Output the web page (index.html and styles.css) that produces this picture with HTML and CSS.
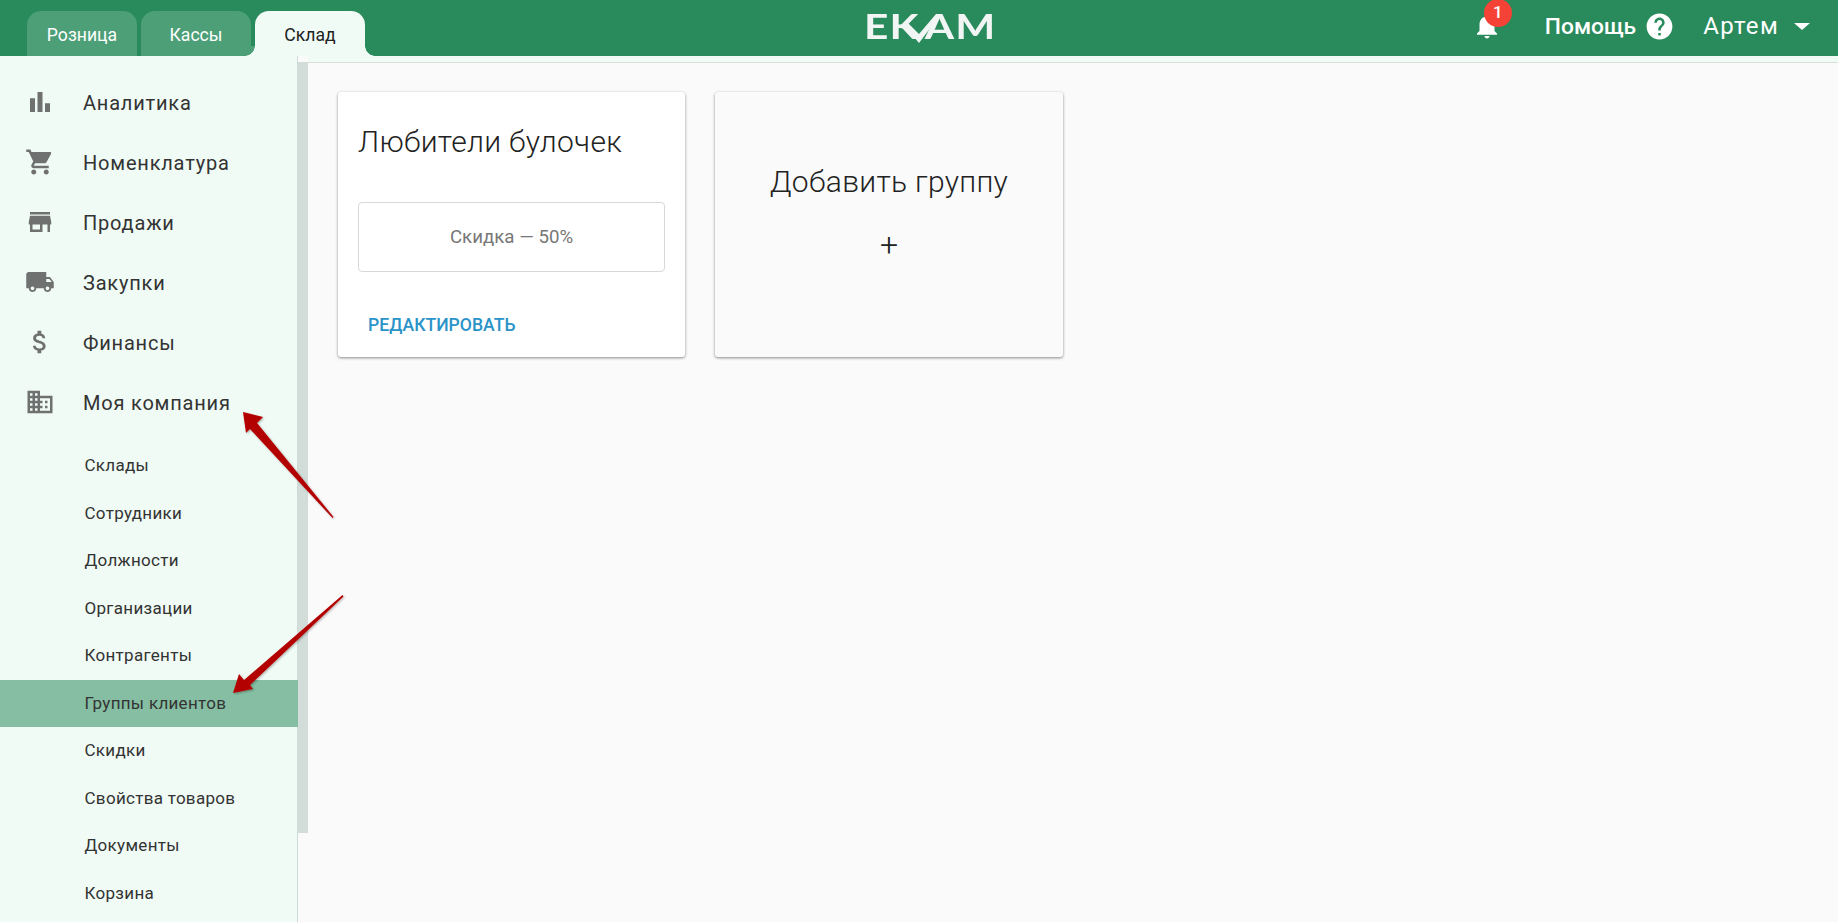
FILE: index.html
```html
<!DOCTYPE html>
<html lang="ru">

<head>
    <meta charset="UTF-8">
    <title>Группы клиентов</title>
    <link rel="stylesheet" href="styles.css">
</head>

<body>
    <header class="topbar">
        <div class="tabs">
            <a class="tab">Розница</a>
            <a class="tab">Кассы</a>
            <a class="tab active">Склад</a>
        </div>
        <div class="logo">
            <span class="logo-text">EK<span class="logo-gap">A</span>M</span>
            <svg class="logo-check" viewBox="0 0 127 56"><path d="M37 24l5-1 11 11 17-20h5L53 43z" /></svg>
        </div>
        <div class="top-right">
            <div class="bell">
                <svg class="bell-icon" viewBox="0 0 24 24"><path d="M12 22c1.1 0 2-.9 2-2h-4c0 1.1.89 2 2 2zm6-6v-5c0-3.07-1.64-5.64-4.5-6.32V4c0-.83-.67-1.5-1.5-1.5s-1.5.67-1.5 1.5v.68C7.63 5.36 6 7.92 6 11v5l-2 2v1h16v-1l-2-2z" /></svg>
                <span class="badge">1</span>
            </div>
            <span class="help-label">Помощь</span>
            <svg class="help-icon" viewBox="0 0 24 24"><path d="M12 2C6.48 2 2 6.48 2 12s4.48 10 10 10 10-4.48 10-10S17.52 2 12 2zm1 17h-2v-2h2v2zm2.07-7.75l-.9.92C13.45 12.9 13 13.5 13 15h-2v-.5c0-1.1.45-2.1 1.17-2.83l1.24-1.26c.37-.36.59-.86.59-1.41 0-1.1-.9-2-2-2s-2 .9-2 2H8c0-2.21 1.79-4 4-4s4 1.79 4 4c0 .88-.36 1.68-.93 2.25z" /></svg>
            <span class="user">Артем</span>
            <span class="caret"></span>
        </div>
    </header>

    <div class="page">
        <nav class="sidebar">
            <a class="nav-item">
                <svg viewBox="0 0 24 24"><path d="M4 9h4v11H4zm12 4h4v7h-4zm-6-9h4v16h-4z" /></svg>
                Аналитика
            </a>
            <a class="nav-item">
                <svg viewBox="0 0 24 24"><path d="M7 18c-1.1 0-1.99.9-1.99 2S5.9 22 7 22s2-.9 2-2-.9-2-2-2zM1 2v2h2l3.6 7.59-1.35 2.45c-.16.28-.25.61-.25.96 0 1.1.9 2 2 2h12v-2H7.42c-.14 0-.25-.11-.25-.25l.03-.12.9-1.63h7.45c.75 0 1.41-.41 1.75-1.03l3.58-6.49c.08-.14.12-.31.12-.48 0-.55-.45-1-1-1H5.21l-.94-2H1zm16 16c-1.1 0-1.99.9-1.99 2s.89 2 1.99 2 2-.9 2-2-.9-2-2-2z" /></svg>
                Номенклатура
            </a>
            <a class="nav-item">
                <svg viewBox="0 0 24 24"><path d="M20 4H4v2h16V4zm1 10v-2l-1-5H4l-1 5v2h1v6h10v-6h4v6h2v-6h1zm-9 4H6v-4h6v4z" /></svg>
                Продажи
            </a>
            <a class="nav-item">
                <svg viewBox="0 0 24 24"><path d="M20 8h-3V4H3c-1.1 0-2 .9-2 2v11h2c0 1.66 1.34 3 3 3s3-1.34 3-3h6c0 1.66 1.34 3 3 3s3-1.34 3-3h2v-5l-3-4zM6 18.5c-.83 0-1.5-.67-1.5-1.5s.67-1.5 1.5-1.5 1.5.67 1.5 1.5-.67 1.5-1.5 1.5zm13.5-9l1.96 2.5H17V9.5h2.5zm-1.5 9c-.83 0-1.5-.67-1.5-1.5s.67-1.5 1.5-1.5 1.5.67 1.5 1.5-.67 1.5-1.5 1.5z" /></svg>
                Закупки
            </a>
            <a class="nav-item">
                <svg viewBox="0 0 24 24"><path d="M11.8 10.9c-2.27-.59-3-1.2-3-2.15 0-1.09 1.01-1.85 2.7-1.85 1.78 0 2.44.85 2.5 2.1h2.21c-.07-1.72-1.12-3.3-3.21-3.81V3h-3v2.16c-1.94.42-3.5 1.68-3.5 3.61 0 2.31 1.91 3.46 4.7 4.13 2.5.6 3 1.48 3 2.41 0 .69-.49 1.79-2.7 1.79-2.06 0-2.87-.92-2.98-2.1h-2.2c.12 2.19 1.76 3.42 3.68 3.83V21h3v-2.15c1.95-.37 3.5-1.5 3.5-3.55 0-2.84-2.43-3.81-4.7-4.4z" /></svg>
                Финансы
            </a>
            <a class="nav-item">
                <svg viewBox="0 0 24 24"><path d="M12 7V3H2v18h20V7H12zM6 19H4v-2h2v2zm0-4H4v-2h2v2zm0-4H4V9h2v2zm0-4H4V5h2v2zm4 12H8v-2h2v2zm0-4H8v-2h2v2zm0-4H8V9h2v2zm0-4H8V5h2v2zm10 12h-8v-2h2v-2h-2v-2h2v-2h-2V9h8v10zm-2-8h-2v2h2v-2zm0 4h-2v2h2v-2z" /></svg>
                Моя компания
            </a>

            <div class="sub-list">
                <a class="sub-item">Склады</a>
                <a class="sub-item">Сотрудники</a>
                <a class="sub-item">Должности</a>
                <a class="sub-item">Организации</a>
                <a class="sub-item">Контрагенты</a>
                <a class="sub-item current">Группы клиентов</a>
                <a class="sub-item">Скидки</a>
                <a class="sub-item">Свойства товаров</a>
                <a class="sub-item">Документы</a>
                <a class="sub-item">Корзина</a>
            </div>
        </nav>
        <div class="scrollbar"></div>

        <main class="content">
            <div class="strip"></div>
            <div class="cards">
                <section class="card">
                    <h2 class="card-title">Любители булочек</h2>
                    <div class="discount">Скидка — 50%</div>
                    <a class="edit-link">Редактировать</a>
                </section>
                <section class="card add-card">
                    <h2 class="add-title">Добавить группу</h2>
                    <div class="add-plus">+</div>
                </section>
            </div>
        </main>
    </div>

    <!-- red annotation arrows on top of the screenshot -->
    <svg class="arrows" viewBox="0 0 1838 922">
        <defs>
            <filter id="arrow-shadow" x="-20%" y="-20%" width="140%" height="140%">
                <feDropShadow dx="1" dy="1" stdDeviation="1" flood-color="#000" flood-opacity=".3" />
            </filter>
        </defs>
        <g filter="url(#arrow-shadow)" fill="#b30404">
            <path d="M243 412L263 417 257 423 333.500 517 332.500 518 250 429 246 433z" />
            <path d="M233 693L239 674 244 680 342.500 595 343.500 596.500 250 685 253 689z" />
        </g>
    </svg>
</body>

</html>
```

FILE: styles.css
```css
* {
    box-sizing: border-box;
}

body {
    margin: 0;
    height: 922px;
    overflow: hidden;
    background: #fafafa;
    font-family: Roboto, "Liberation Sans", sans-serif;
    color: #333;
}

a {
    display: block;
}

/* top bar */
.topbar {
    display: grid;
    grid-template-columns: 866px 127px 1fr;
    height: 56px;
    background: #298a5c;
    color: #fff;
}

.tabs {
    display: flex;
    align-items: flex-end;
    gap: 4px;
    padding-left: 27px;
}

.tab {
    position: relative;
    width: 110px;
    height: 45px;
    padding-top: 9px;
    border-radius: 14px 14px 0 0;
    background: #4d9f78;
    font-size: 17.600px;
    line-height: 30px;
    text-align: center;
}

.tab:nth-child(2) {
    border-bottom-right-radius: 8px;
}

.tab.active {
    background: #f0fbf5;
    color: #222;
}

.tab.active::before,
.tab.active::after {
    content: "";
    position: absolute;
    bottom: 0;
    width: 10px;
    height: 10px;
}

.tab.active::before {
    left: -10px;
    background: radial-gradient(circle at 0 0, #4d9f78 9.500px, #f0fbf5 10px);
}

.tab.active::after {
    right: -10px;
    background: radial-gradient(circle at 100% 0, #298a5c 9.500px, #f0fbf5 10px);
}

.logo {
    position: relative;
    height: 56px;
}

.logo-text {
    display: block;
    margin: -3px 0 0 -2px;
    font-family: Lato, sans-serif;
    font-size: 35px;
    font-weight: 700;
    line-height: 56px;
    letter-spacing: 1px;
    white-space: nowrap;
    color: #f1f5f3;
    transform: scaleX(1.21);
    transform-origin: 0 0;
}

.logo-gap {
    margin-left: 4px;
}

.logo-check {
    position: absolute;
    left: 0;
    top: 0;
    width: 127px;
    height: 56px;
    fill: #f1f5f3;
}

.top-right {
    display: flex;
    align-items: center;
    justify-content: flex-end;
    padding: 0 28px 4px 0;
}

.bell {
    position: relative;
    width: 30px;
    height: 30px;
    margin-right: 43px;
}

.bell-icon {
    width: 30px;
    height: 30px;
    fill: #fff;
}

.badge {
    position: absolute;
    left: 12px;
    top: -12px;
    width: 28px;
    height: 28px;
    border-radius: 50%;
    background: #f44336;
    font-size: 17px;
    font-weight: 500;
    line-height: 26px;
    text-align: center;
}

.help-label {
    font-size: 22.800px;
    font-weight: 500;
}

.help-icon {
    width: 31px;
    height: 31px;
    margin-left: 8px;
    fill: #fff;
}

.user {
    margin-left: 28px;
    font-size: 24px;
    letter-spacing: 1.300px;
}

.caret {
    width: 0;
    height: 0;
    margin-left: 15px;
    border-left: 8px solid transparent;
    border-right: 8px solid transparent;
    border-top: 7px solid #fff;
}

/* layout below the bar */
.page {
    display: flex;
    height: 866px;
}

.sidebar {
    width: 298px;
    flex-shrink: 0;
    padding-top: 17px;
    background: #f0fbf5;
    border-right: 1px solid #cfdcd6;
}

.nav-item {
    display: flex;
    align-items: center;
    gap: 28px;
    height: 60px;
    padding-left: 25px;
    font-size: 20px;
    letter-spacing: .8px;
    color: #333;
}

.nav-item svg {
    width: 30px;
    height: 30px;
    margin-top: -2px;
    fill: #6e716f;
}

.sub-list {
    margin-top: 9px;
    margin-right: -1px;
}

.sub-item {
    height: 47.500px;
    padding-left: 84.500px;
    font-size: 17px;
    letter-spacing: .3px;
    line-height: 47px;
    color: #333;
}

.sub-item.current {
    background: #85bea2;
}

.scrollbar {
    width: 10px;
    height: 771px;
    margin-top: 6px;
    flex-shrink: 0;
    background: #d2dcd8;
}

.content {
    flex: 1;
}

.strip {
    height: 7px;
    background: #f0fbf5;
    border-bottom: 1px solid #d9e0dc;
}

.cards {
    display: flex;
    gap: 30px;
    padding: 29px 0 0 30px;
}

.card {
    width: 347px;
    height: 265px;
    padding: 0 20px;
    background: #fff;
    border-radius: 3px;
    box-shadow: 0 1px 3px rgba(0, 0, 0, .45);
}

.card-title {
    margin: 32px 0 0;
    font-size: 30px;
    font-weight: 300;
    letter-spacing: .3px;
    line-height: 36px;
    color: #222;
}

.discount {
    height: 70px;
    margin-top: 42px;
    border: 1px solid #d8d8d8;
    border-radius: 4px;
    font-size: 18.700px;
    line-height: 68px;
    text-align: center;
    color: #777;
}

.edit-link {
    margin: 40px 0 0 10px;
    font-size: 17.600px;
    font-weight: 500;
    line-height: 26px;
    text-transform: uppercase;
    color: #2a93c8;
}

.add-card {
    width: 348px;
    background: #fafafa;
    text-align: center;
}

.add-title {
    margin: 72px 0 0;
    font-size: 30px;
    font-weight: 300;
    letter-spacing: .3px;
    line-height: 36px;
    color: #222;
}

.add-plus {
    margin-top: 25px;
    font-size: 32px;
    font-weight: 300;
    line-height: 40px;
    color: #222;
}

/* annotation layer */
.arrows {
    position: absolute;
    left: 0;
    top: 0;
    width: 1838px;
    height: 922px;
    pointer-events: none;
}
```
